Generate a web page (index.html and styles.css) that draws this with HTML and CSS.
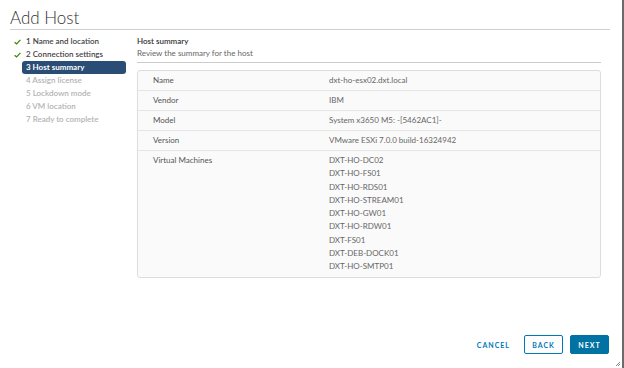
FILE: index.html
```html
<!DOCTYPE html>
<html lang="en">
<head>
    <meta charset="UTF-8">
    <title>Add Host</title>
    <link rel="stylesheet" href="styles.css">
</head>
<body>

    <div class="dialog">
        <h1 class="title">Add Host</h1>

        <div class="body">
            <ul class="steps">
                <li class="step done">
                    <svg class="check" width="7" height="6" viewBox="0 0 7 6"><path d="M0.6 3.2 L2.6 5 L6.4 0.8" stroke="#3c8500" stroke-width="1.2" fill="none"/></svg>
                    <span class="label">1 Name and location</span>
                </li>
                <li class="step done">
                    <svg class="check" width="7" height="6" viewBox="0 0 7 6"><path d="M0.6 3.2 L2.6 5 L6.4 0.8" stroke="#3c8500" stroke-width="1.2" fill="none"/></svg>
                    <span class="label">2 Connection settings</span>
                </li>
                <li class="step current"><span class="check"></span><span class="label">3 Host summary</span></li>
                <li class="step"><span class="check"></span><span class="label">4 Assign license</span></li>
                <li class="step"><span class="check"></span><span class="label">5 Lockdown mode</span></li>
                <li class="step"><span class="check"></span><span class="label">6 VM location</span></li>
                <li class="step"><span class="check"></span><span class="label">7 Ready to complete</span></li>
            </ul>

            <div class="content">
                <div class="page-head">
                    <h2>Host summary</h2>
                    <p>Review the summary for the host</p>
                </div>

                <div class="summary">
                    <div class="row">
                        <div class="key">Name</div>
                        <div class="value">dxt-ho-esx02.dxt.local</div>
                    </div>
                    <div class="row">
                        <div class="key">Vendor</div>
                        <div class="value">IBM</div>
                    </div>
                    <div class="row">
                        <div class="key">Model</div>
                        <div class="value">System x3650 M5: -[5462AC1]-</div>
                    </div>
                    <div class="row">
                        <div class="key">Version</div>
                        <div class="value">VMware ESXi 7.0.0 build-16324942</div>
                    </div>
                    <div class="row vms">
                        <div class="key">Virtual Machines</div>
                        <div class="value">
                            <div>DXT-HO-DC02</div>
                            <div>DXT-HO-FS01</div>
                            <div>DXT-HO-RDS01</div>
                            <div>DXT-HO-STREAM01</div>
                            <div>DXT-HO-GW01</div>
                            <div>DXT-HO-RDW01</div>
                            <div>DXT-FS01</div>
                            <div>DXT-DEB-DOCK01</div>
                            <div>DXT-HO-SMTP01</div>
                        </div>
                    </div>
                </div>
            </div>
        </div>

        <div class="footer">
            <button class="btn link">Cancel</button>
            <button class="btn outline">Back</button>
            <button class="btn primary">Next</button>
        </div>

        <svg class="grip" width="6" height="6" viewBox="0 0 6 6">
            <path d="M5 1 L1 5 M5 3 L3 5" stroke="#888" stroke-width="1" fill="none"/>
        </svg>
    </div>

</body>
</html>
```

FILE: styles.css
```css
body {
    margin: 0;
    background-color: #ffffff;
    font-family: 'Lato', 'Open Sans', sans-serif;
    color: #565656;
}

.dialog {
    position: relative;
    width: 624px;
    height: 368px;
    box-sizing: border-box;
    border-right: 2px solid #6b6b6b;
    display: flex;
    flex-direction: column;
}

.title {
    margin: 0 12px 0 10px;
    padding-top: 8px;
    height: 21px;
    font-size: 17px;
    line-height: 20px;
    font-weight: 300;
    color: #333;
    border-bottom: 1px solid #cfcfcf;
}

.body {
    display: flex;
    flex: 1;
}

.steps {
    list-style: none;
    margin: 0;
    padding: 5px 0 0 12px;
    width: 114px;
}

.step {
    display: flex;
    align-items: center;
    height: 13px;
    line-height: 13px;
    font-size: 8px;
    font-weight: 600;
    color: #b3b3b3;
}

.step.done {
    color: #454545;
}

.check {
    width: 10px;
    flex: none;
}

.step svg.check {
    width: 7px;
    margin: 0 1px 0 2px;
}

.label {
    flex: 1;
    padding-left: 4px;
    border-radius: 3px;
}

.step.current .label {
    background-color: #2a4d75;
    color: #ffffff;
    font-weight: 700;
}

.content {
    flex: 1;
    padding: 5px 21px 0 11px;
}

.page-head {
    border-bottom: 1px solid #cccccc;
    padding-bottom: 3px;
}

.page-head h2 {
    margin: 0;
    font-size: 8px;
    line-height: 12px;
    font-weight: 600;
    color: #333;
}

.page-head p {
    margin: 0;
    font-size: 8px;
    line-height: 12px;
    color: #666;
}

.summary {
    margin-top: 7px;
    background-color: #fafafa;
    border: 1px solid #dddddd;
    border-radius: 3px;
    font-size: 8px;
    color: #666;
}

.row {
    display: flex;
    height: 19px;
    line-height: 19px;
    border-bottom: 1px solid #e6e6e6;
}

.row.vms {
    height: auto;
    line-height: 13.25px;
    padding: 3px 0 4px;
    border-bottom: none;
}

.key {
    width: 176px;
    padding-left: 15px;
    color: #555;
}

.value {
    flex: 1;
    color: #666;
}

.footer {
    display: flex;
    justify-content: flex-end;
    align-items: center;
    gap: 7px;
    padding: 0 13px 14px 0;
}

.btn {
    height: 19px;
    width: 39px;
    padding: 0;
    font-family: 'Lato', sans-serif;
    font-size: 7px;
    font-weight: 700;
    letter-spacing: 1px;
    text-transform: uppercase;
    border-radius: 2px;
    cursor: pointer;
}

.btn.link {
    width: auto;
    margin-right: 7px;
    background: none;
    border: none;
    color: #0079b8;
}

.btn.outline {
    background-color: #ffffff;
    border: 1px solid #0079b8;
    color: #0079b8;
}

.btn.primary {
    background-color: #0072a3;
    border: 1px solid #0072a3;
    color: #ffffff;
}

.grip {
    position: absolute;
    right: 1px;
    bottom: 1px;
}
```
